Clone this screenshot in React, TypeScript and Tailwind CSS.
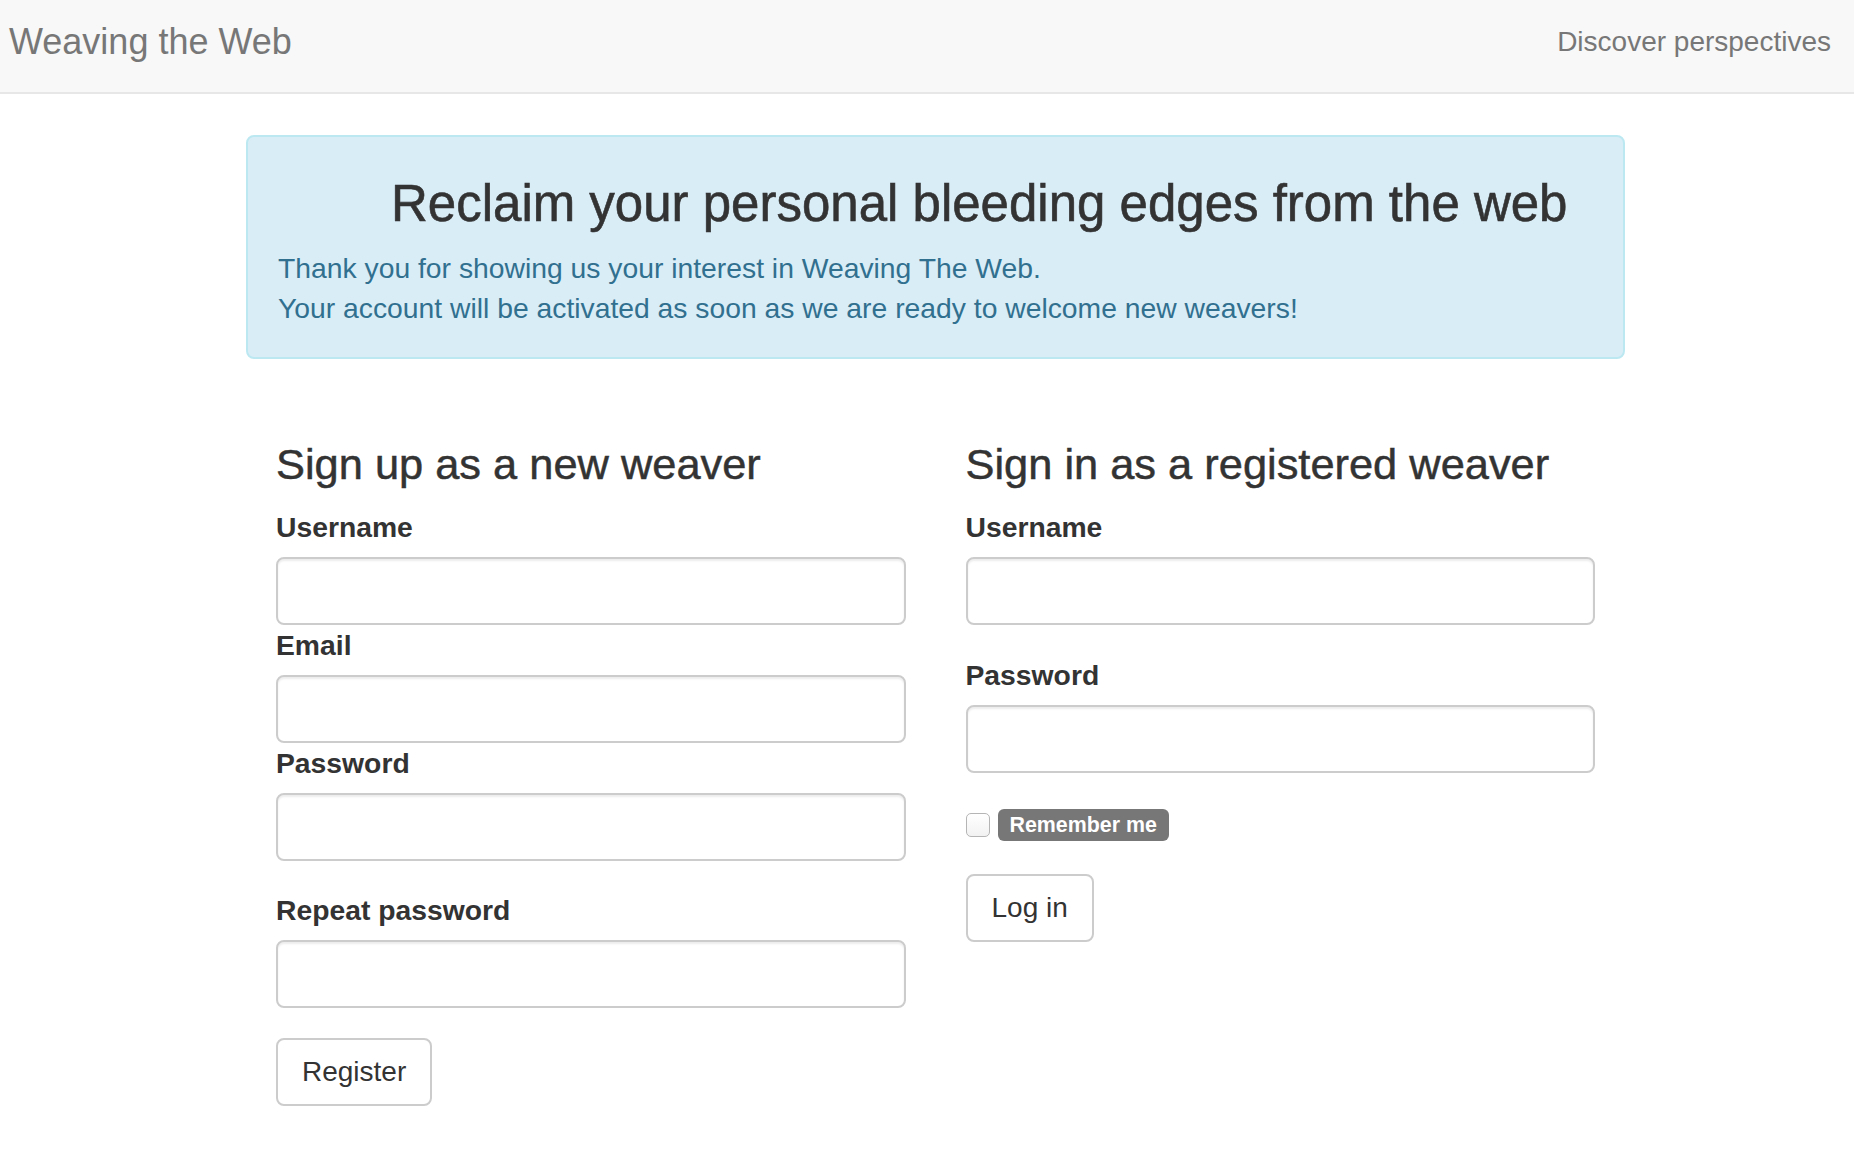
const font = "font-['Liberation_Sans','Helvetica_Neue',Arial,sans-serif]"

function Field({ label, className = "" }: { label: string; className?: string }) {
  return (
    <div className={className}>
      <label className="block text-[28.3px] leading-[40px] font-bold text-[#333] mb-[10px]">{label}</label>
      <input
        type="text"
        className="block w-full h-[68px] rounded-[8px] border-2 border-[#ccc] bg-white px-[24px] text-[28px] shadow-[inset_0_2px_2px_rgba(0,0,0,0.075)] outline-none"
      />
    </div>
  )
}

function Button({ children }: { children: React.ReactNode }) {
  return (
    <button className="h-[68px] px-[24px] rounded-[8px] border-2 border-[#ccc] bg-white text-[28px] leading-[40px] text-[#333]">
      {children}
    </button>
  )
}

export default function App() {
  return (
    <div className={`min-h-screen bg-white text-[#333] ${font}`}>
      {/* Navbar */}
      <nav className="h-[94px] bg-[#f8f8f8] border-b-2 border-[#e7e7e7] flex items-start justify-between pt-[22px] pl-[9px] pr-[23px]">
        <a className="text-[36px] leading-[40px] text-[#777]">Weaving the Web</a>
        <a className="text-[28px] leading-[40px] text-[#777]">Discover perspectives</a>
      </nav>

      <main className="ml-[246px] w-[1379px] pb-[60px]">
        <div className="mt-[41px] h-[224px] rounded-[8px] border-2 border-[#bce8f1] bg-[#d9edf7] px-[30px] pt-[30px]">
          <h1 className="mt-[9px] ml-[113px] text-[51px] leading-[55px] text-[#333] [-webkit-text-stroke:0.6px_#333]">
            Reclaim your personal bleeding edges from the web
          </h1>
          <div className="mt-[17px] text-[28.3px] leading-[40px] text-[#31708f]">
            <p>Thank you for showing us your interest in Weaving The Web.</p>
            <p>Your account will be activated as soon as we are ready to welcome new weavers!</p>
          </div>
        </div>

        <div className="grid grid-cols-2 mt-[82px]">
          {/* Sign up */}
          <div className="px-[30px]">
            <h3 className="text-[43.4px] leading-[47px] text-[#333] mb-[19px] [-webkit-text-stroke:0.5px_#333]">
              Sign up as a new weaver
            </h3>
            <Field label="Username" />
            <Field label="Email" />
            <Field label="Password" className="mb-[29px]" />
            <Field label="Repeat password" className="mb-[30px]" />
            <Button>Register</Button>
          </div>

          {/* Sign in */}
          <div className="px-[30px]">
            <h3 className="text-[43.4px] leading-[47px] text-[#333] mb-[19px] [-webkit-text-stroke:0.5px_#333]">
              Sign in as a registered weaver
            </h3>
            <Field label="Username" className="mb-[30px]" />
            <Field label="Password" />
            <div className="mt-[32px] mb-[29px] h-[40px] flex items-center">
              <span className="w-[24px] h-[24px] rounded-[5px] border border-[#b5b5b5] bg-gradient-to-b from-white to-[#f2f2f2]" />
              <span className="ml-[8px] h-[32px] flex items-center rounded-[6px] bg-[#777] px-[12px] text-[21.4px] font-bold text-white">
                Remember me
              </span>
            </div>
            <Button>Log in</Button>
          </div>
        </div>
      </main>
    </div>
  )
}
